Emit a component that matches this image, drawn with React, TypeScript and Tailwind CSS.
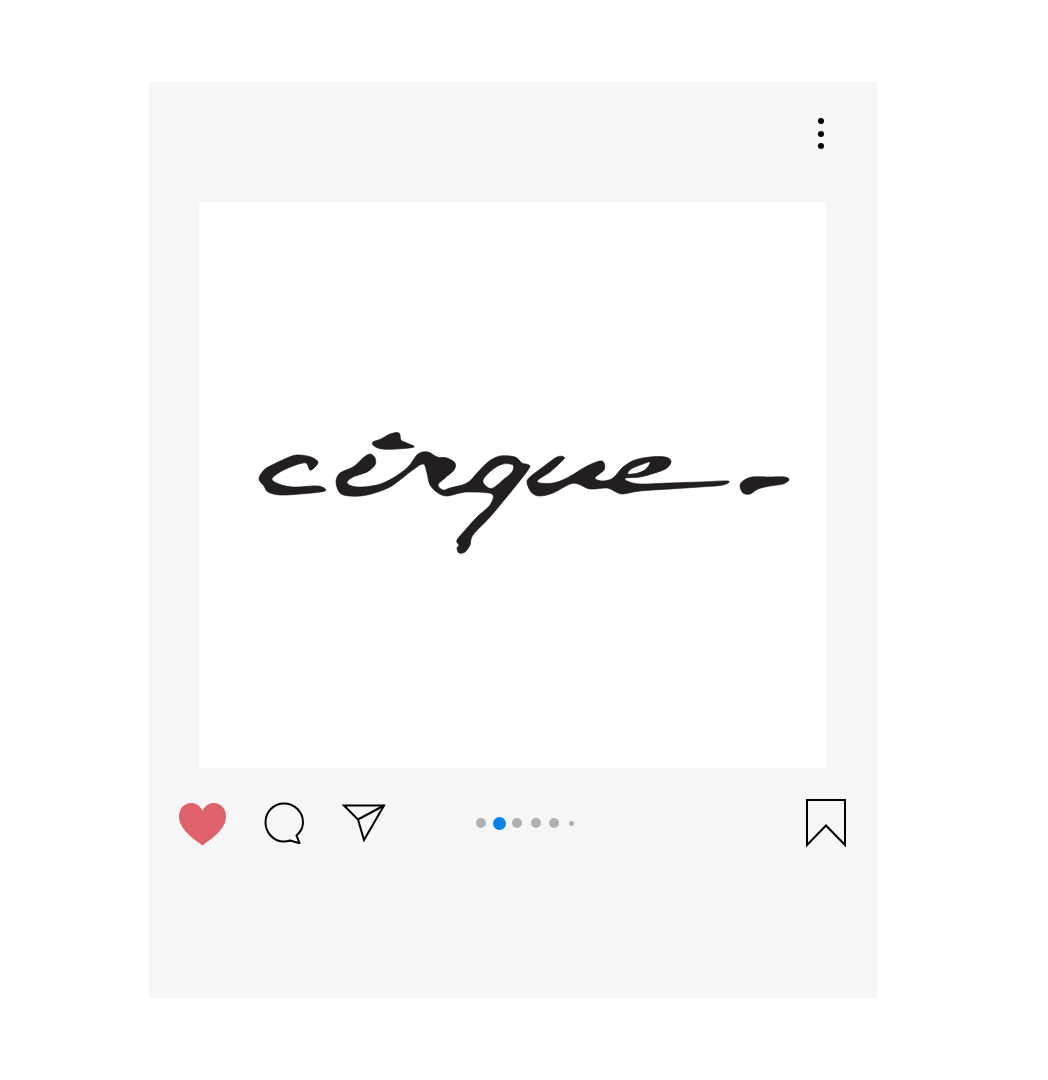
import React from "react";

type P = [number, number];

function smooth(pts: P[]): string {
  const n = pts.length;
  let d = `M${pts[0][0]} ${pts[0][1]}`;
  for (let i = 0; i < n; i++) {
    const p0 = pts[(i - 1 + n) % n];
    const p1 = pts[i];
    const p2 = pts[(i + 1) % n];
    const p3 = pts[(i + 2) % n];
    const t = 0.16;
    const c1x = p1[0] + (p2[0] - p0[0]) * t;
    const c1y = p1[1] + (p2[1] - p0[1]) * t;
    const c2x = p2[0] - (p3[0] - p1[0]) * t;
    const c2y = p2[1] - (p3[1] - p1[1]) * t;
    d += `C${c1x.toFixed(1)} ${c1y.toFixed(1)} ${c2x.toFixed(1)} ${c2y.toFixed(1)} ${p2[0]} ${p2[1]}`;
  }
  return d + "Z";
}

const letterC: P[] = [[318, 462], [311, 457], [300, 455], [292, 456], [276, 463], [264, 470], [259, 479], [264, 486], [268, 492], [280, 495], [300, 494], [325, 491], [318, 486], [293, 487], [279, 484], [272, 479], [280, 472], [293, 466], [303, 463], [307, 464], [310, 470], [314, 468]];
const accent: P[] = [[373, 442], [381, 439], [390, 434], [399, 433], [401, 440], [407, 443], [414, 447], [397, 449], [382, 449], [374, 446]];
const irq: P[] = [
  [375, 458], [370, 454], [363, 458], [353, 467], [340, 473], [336, 482], [340, 493], [350, 496], [367, 495], [390, 487], [410, 472], [423, 464], [427, 473], [430, 485], [438, 493], [447, 496], [460, 493], [470, 492], [492, 494], [490, 505], [477, 517], [467, 528], [457, 540], [459, 545], [457, 548], [459, 553], [465, 552], [470, 545], [473, 535], [490, 517], [510, 493], [528, 470], [529, 465], [522, 463], [515, 457], [500, 456], [488, 462], [478, 472], [467, 483], [450, 488], [443, 490], [438, 485], [445, 478], [454, 470], [455, 463], [447, 458], [437, 457], [428, 452], [418, 454], [408, 467], [393, 478], [377, 485], [357, 487], [347, 483], [353, 477], [367, 472], [375, 465],
];
const qHole: P[] = [[513, 465], [503, 464], [492, 470], [483, 480], [487, 487], [493, 488], [503, 480], [512, 472]];
const ue: P[] = [[564, 457], [557, 457], [543, 467], [530, 477], [527, 483], [532, 493], [540, 496], [553, 493], [570, 484], [578, 484], [590, 489], [607, 488], [616, 492], [623, 494], [640, 491], [670, 489], [700, 487], [723, 485], [728, 481], [700, 482], [670, 483], [640, 484], [627, 481], [626, 478], [640, 477], [655, 473], [667, 468], [671, 461], [665, 457], [650, 457], [635, 460], [623, 467], [613, 478], [603, 481], [595, 478], [604, 470], [604, 463], [600, 461], [587, 466], [567, 478], [553, 483], [540, 483], [538, 480], [550, 472], [563, 460]];
const eHole: P[] = [[650, 462], [640, 465], [631, 469], [628, 474], [638, 473], [646, 469]];
const dash: P[] = [[740, 486], [743, 481], [752, 477], [770, 477], [785, 477], [789, 480], [783, 484], [770, 486], [758, 489], [750, 494], [743, 493]];

export default function App() {
  return (
    <div className="min-h-[1080px] bg-white pt-[82px] pl-[149px]">
      <div className="flex h-[916px] w-[728px] flex-col bg-[#f6f6f6]">
        <div className="flex h-[120px] shrink-0 items-start justify-end pr-[53px] pt-[36px]">
          <div className="flex flex-col gap-[6.5px]">
            <span className="block h-[6px] w-[6px] rounded-full bg-black" />
            <span className="block h-[6px] w-[6px] rounded-full bg-black" />
            <span className="block h-[6px] w-[6px] rounded-full bg-black" />
          </div>
        </div>

        <div className="mx-[50px] h-[566px] w-[627px] shrink-0 bg-white">
          <svg viewBox="199 202 627 566" className="block h-full w-full" role="img" aria-label="cirque">
            <g fill="#231f20" stroke="#111" strokeWidth="0.6" strokeLinejoin="round">
              <path d={smooth(letterC)} />
              <path d={smooth(accent)} />
              <path fillRule="evenodd" d={smooth(irq) + smooth(qHole)} />
              <path fillRule="evenodd" d={smooth(ue) + smooth(eHole)} />
              <path d={smooth(dash)} />
            </g>
          </svg>
        </div>

        <div className="flex h-[110px] shrink-0 items-center pl-[30px] pr-[31px]">
          <svg viewBox="0 0 47 43" className="mt-[2px] h-[43px] w-[47px] shrink-0">
            <path
              d="M23.500 42.500C17 37.500 0 27 0 13.500 0 5.500 5.500 0 12 0c5 0 9 2.500 11.500 8C26 2.500 30 0 35 0c6.500 0 12 5.500 12 13.500C47 27 30 37.500 23.500 42.500Z"
              fill="#df616b"
            />
          </svg>
          <svg viewBox="0 0 41 42" className="ml-[38px] h-[42px] w-[41px] shrink-0" fill="none" stroke="#000" strokeWidth="2">
            <path d="M32.500 33.500C36.500 30 39 25.500 39 20.500 39 10 30.500 1.500 20 1.500S1.500 10 1.500 20.500 10 39.500 20 39.500C22 39.500 24 39.200 26 38.500L35.500 41.200Z" strokeLinejoin="round" />
          </svg>
          <svg viewBox="0 0 44 38" className="ml-[37px] h-[38px] w-[44px] shrink-0" fill="none" stroke="#000" strokeWidth="2" strokeLinejoin="miter">
            <path d="M2 1.500H42L22 36 16 15.500Z" />
            <path d="M16 15.500 42 1.500" />
          </svg>
          <div className="ml-[90px] flex items-center">
            <span className="h-[10px] w-[10px] rounded-full bg-[#b0b0b0]" />
            <span className="ml-[6.500px] h-[13px] w-[13px] rounded-full bg-[#0582e8]" />
            <span className="ml-[6.500px] h-[10px] w-[10px] rounded-full bg-[#b0b0b0]" />
            <span className="ml-[8.500px] h-[10px] w-[10px] rounded-full bg-[#b0b0b0]" />
            <span className="ml-[8px] h-[10px] w-[10px] rounded-full bg-[#b0b0b0]" />
            <span className="ml-[10.500px] h-[5px] w-[5px] rounded-full bg-[#b0b0b0]" />
          </div>
          <svg viewBox="0 0 40 48" className="ml-auto h-[48px] w-[40px] shrink-0" fill="none" stroke="#000" strokeWidth="2" strokeLinejoin="miter">
            <path d="M1 1H39V46L20 26.500 1 46Z" />
          </svg>
        </div>
      </div>
    </div>
  );
}
